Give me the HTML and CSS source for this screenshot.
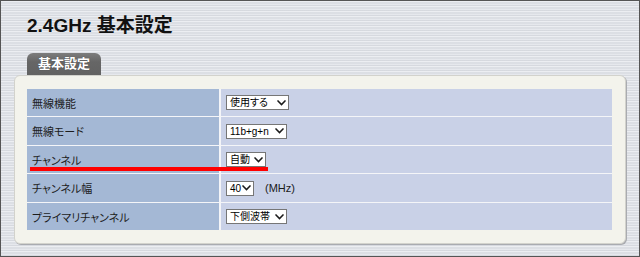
FILE: index.html
```html
<!DOCTYPE html>
<html lang="ja">
<head>
<meta charset="utf-8">
<title>2.4GHz 基本設定</title>
<link rel="stylesheet" href="styles.css">
</head>
<body>
<div class="frame">
  <h1 class="title">2.4GHz 基本設定</h1>
  <div class="tab">基本設定</div>
  <div class="panel">
    <div class="grid">
      <div class="label">無線機能</div>
      <div class="value"><span class="select sel-w63"><span class="opt">使用する</span><svg class="chev" viewBox="0 0 9 6" width="9" height="6"><polyline points="1,1 4.5,4.6 8,1"/></svg></span></div>

      <div class="label">無線モード</div>
      <div class="value"><span class="select sel-w61"><span class="opt">11b+g+n</span><svg class="chev" viewBox="0 0 9 6" width="9" height="6"><polyline points="1,1 4.5,4.6 8,1"/></svg></span></div>

      <div class="label">チャンネル</div>
      <div class="value"><span class="select sel-w40"><span class="opt">自動</span><svg class="chev" viewBox="0 0 9 6" width="9" height="6"><polyline points="1,1 4.5,4.6 8,1"/></svg></span></div>

      <div class="label">チャンネル幅</div>
      <div class="value"><span class="select sel-w28"><span class="opt">40</span><svg class="chev" viewBox="0 0 9 6" width="9" height="6"><polyline points="1,1 4.5,4.6 8,1"/></svg></span><span class="unit">(MHz)</span></div>

      <div class="label">プライマリチャンネル</div>
      <div class="value"><span class="select sel-w61"><span class="opt">下側波帯</span><svg class="chev" viewBox="0 0 9 6" width="9" height="6"><polyline points="1,1 4.5,4.6 8,1"/></svg></span></div>
    </div>
  </div>
  <div class="marker"></div>
</div>
</body>
</html>
```
FILE: styles.css
```css
html, body {
  margin: 0;
  padding: 0;
}

body {
  font-family: "Liberation Sans", "Noto Sans CJK JP", sans-serif;
  font-feature-settings: "palt";
  color: #1a1a1a;
}

.frame {
  position: relative;
  box-sizing: border-box;
  width: 640px;
  height: 257px;
  border: 1px solid #555;
  background-color: #e0e3e9;
  background-image:
    repeating-linear-gradient(to bottom,
      rgba(255,255,255,0.4) 0px, rgba(255,255,255,0.4) 1px,
      rgba(0,0,0,0.02) 1px, rgba(0,0,0,0.02) 3px,
      rgba(255,255,255,0.18) 3px, rgba(255,255,255,0.18) 4px,
      rgba(0,0,0,0.045) 4px, rgba(0,0,0,0.045) 5px);
  overflow: hidden;
}

.title {
  margin: 0;
  padding: 13px 0 0 26px;
  font-size: 19px;
  line-height: 24px;
  font-weight: bold;
  color: #111;
}

.tab {
  margin: 15px 0 0 26px;
  width: 74px;
  height: 22px;
  box-sizing: border-box;
  border-radius: 6px 6px 0 0;
  background: linear-gradient(to bottom, #7c7c7c, #666 40%, #626262);
  color: #fff;
  font-size: 13px;
  font-weight: bold;
  line-height: 22px;
  text-align: center;
  text-shadow: 0 0 1px rgba(0,0,0,0.4);
}

.panel {
  margin: 0 13px;
  height: 169px;
  box-sizing: border-box;
  border: 1px solid #d2d2cc;
  border-radius: 6px;
  background: #f3f3ec;
  box-shadow: 1px 1px 0 #a9abb0;
  padding: 13px 13px 13px 12px;
}

.grid {
  display: grid;
  grid-template-columns: 192px 391px;
  grid-template-rows: 27px 28px 27px 28px 27px;
  column-gap: 2px;
  row-gap: 1px;
  background: #f4f5f8;
}

.label {
  background: #a4b8d5;
  display: flex;
  align-items: center;
  padding-left: 5px;
  font-size: 11px;
  color: #1c1c1c;
}

.value {
  background: #c9d1e7;
  display: flex;
  align-items: center;
  padding-left: 5px;
  font-size: 11px;
}

.select {
  box-sizing: border-box;
  height: 15px;
  display: inline-flex;
  align-items: center;
  justify-content: space-between;
  border: 1px solid #767676;
  background: #fff;
  padding: 0 2px 0 3px;
  font-size: 10px;
  line-height: 13px;
  color: #000;
}

.sel-w63 { width: 63px; }
.sel-w61 { width: 61px; }
.sel-w40 { width: 40px; }
.sel-w28 { width: 28px; }

.opt {
  white-space: nowrap;
}

.chev {
  flex: none;
  display: block;
}

.chev polyline {
  fill: none;
  stroke: #1a1a1a;
  stroke-width: 1.5;
  stroke-linecap: square;
}

.unit {
  margin-left: 11px;
  font-size: 11px;
  color: #1a1a1a;
}

.marker {
  position: absolute;
  left: 29px;
  top: 166px;
  width: 238px;
  height: 4px;
  background: #ff0000;
}
```
